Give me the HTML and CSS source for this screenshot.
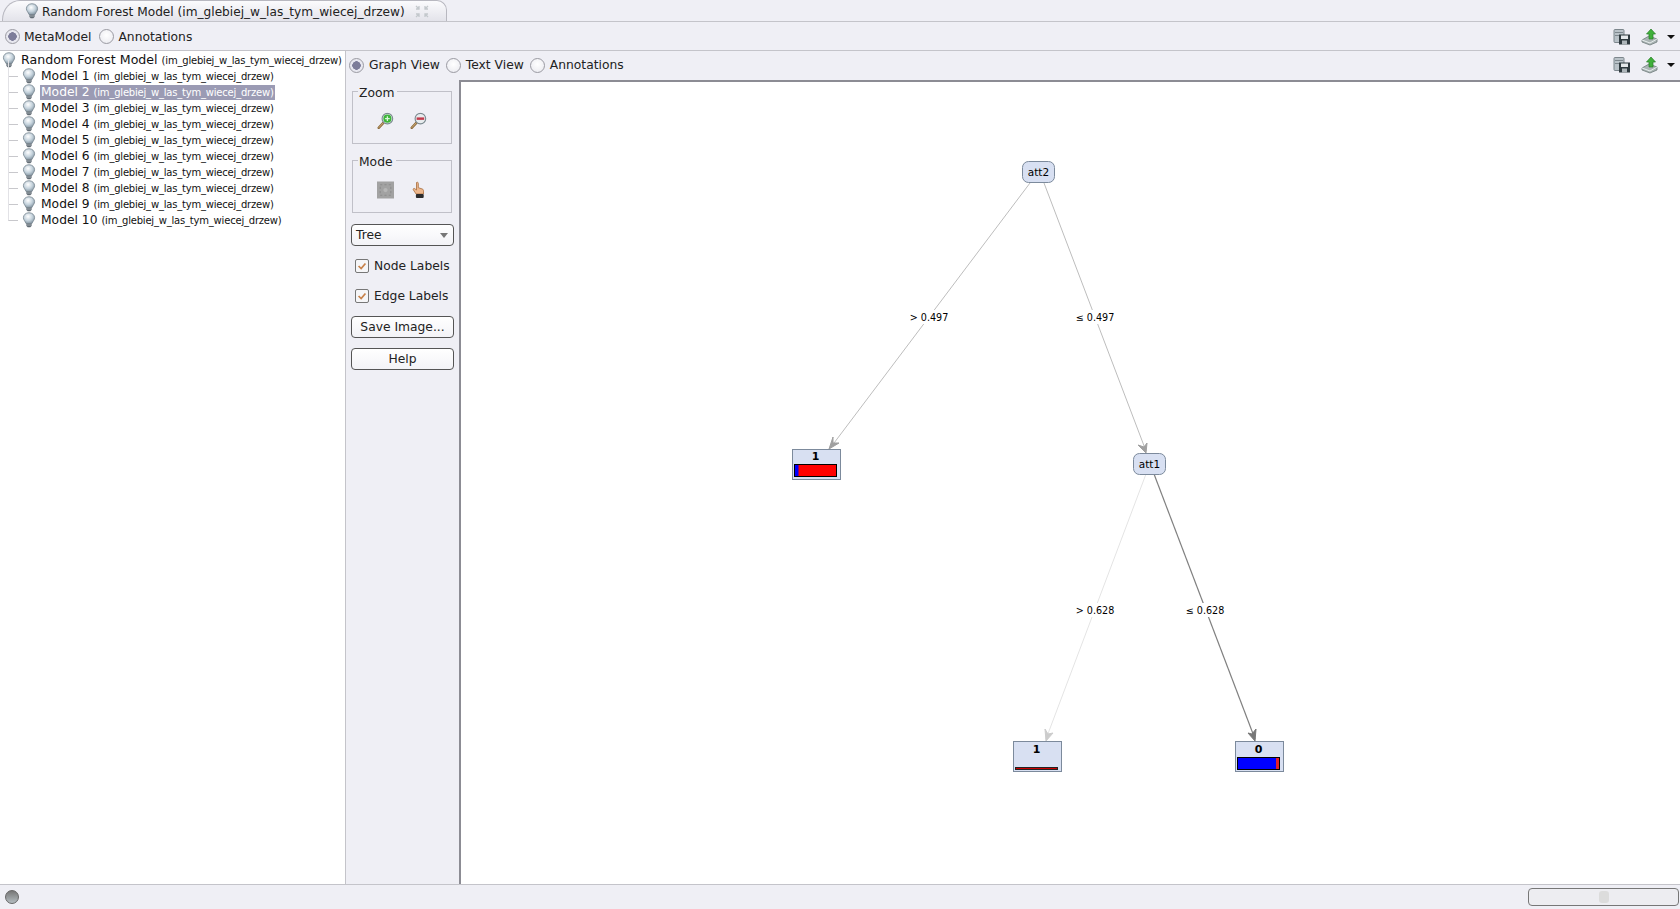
FILE: index.html
```html
<!DOCTYPE html>
<html lang="en">
<head>
<meta charset="utf-8">
<title>Random Forest Model</title>
<link rel="stylesheet" href="styles.css">
</head>
<body>
<svg class="defs" width="0" height="0" aria-hidden="true">
  <defs>
    <radialGradient id="glass" cx="0.42" cy="0.35" r="0.7">
      <stop offset="0" stop-color="#ffffff"/>
      <stop offset="0.55" stop-color="#c4d2dc"/>
      <stop offset="1" stop-color="#7f909c"/>
    </radialGradient>
    <symbol id="bulb" viewBox="0 0 16 18">
      <path d="M8 .7C4.200.7 1.600 3.300 1.600 6.400c0 2.600 2.200 4 3 6.600h6.800c.8-2.600 3-4 3-6.600C14.400 3.300 11.800.7 8 .7z" fill="url(#glass)" stroke="#76858f" stroke-width=".9"/>
      <path d="M5 13.200h6v2.300l-1.500 1.800h-3L5 15.500z" fill="#59636b"/>
      <path d="M5 14.300h6M5 15.500h6" stroke="#b4bcc2" stroke-width=".6"/>
    </symbol>
    <symbol id="floppy" viewBox="0 0 18 17">
      <rect x="1" y="1" width="10" height="13" rx="1" fill="#b9c2c8" stroke="#7d878d"/>
      <path d="M2 4h8M2 7h8" stroke="#7d878d"/>
      <rect x="6" y="6" width="11" height="10" fill="#2f3a3f"/>
      <rect x="8" y="7" width="7" height="3.500" fill="#e4e8ea"/>
      <rect x="9" y="12" width="5" height="4" fill="#aeb6ba"/>
    </symbol>
    <symbol id="upload" viewBox="0 0 18 18">
      <path d="M1 12l7-4 8 3v3l-7 3-8-3z" fill="#aab4b4" stroke="#6f7b7b" stroke-width=".8"/>
      <path d="M1 12l8 3 7-4" fill="none" stroke="#e8eeee" stroke-width="1"/>
      <path d="M10 1l4.500 5h-2.500v5H8V6H5.500z" fill="#3fb03a" stroke="#2a7d2a" stroke-width=".7"/>
    </symbol>
    <symbol id="lens" viewBox="0 0 18 18">
      <path d="M1.800 16.200l5.400-5.800" stroke="#8a6a3c" stroke-width="2.600" stroke-linecap="round"/>
      <path d="M1.800 16.200l5.400-5.800" stroke="#d8b27a" stroke-width="1"/>
      <circle cx="11" cy="6.500" r="5.600" fill="#e8ecee" stroke="#7c8a90" stroke-width="1.200"/>
    </symbol>
  </defs>
</svg>

<div class="window">
  <div class="tabbar">
    <div class="tab">
      <svg class="bulb tab-bulb"><use href="#bulb"/></svg>
      <span class="tab-title">Random Forest Model (im_glebiej_w_las_tym_wiecej_drzew)</span>
      <svg class="detach" viewBox="0 0 14 13">
        <path d="M1 1l3 3M4 1v3H1M13 1l-3 3M10 1v3h3M1 12l3-3M4 12V9H1M13 12l-3-3M10 12V9h3" fill="none" stroke="#c3c8cc" stroke-width="1.300"/>
      </svg>
    </div>
  </div>

  <div class="toolbar top-toolbar">
    <label class="radio-item"><span class="radio on"></span>MetaModel</label>
    <label class="radio-item"><span class="radio"></span>Annotations</label>
    <div class="tool-icons">
      <svg class="tool-icon"><use href="#floppy"/></svg>
      <svg class="tool-icon"><use href="#upload"/></svg>
      <span class="drop-arrow"></span>
    </div>
  </div>

  <div class="main">
    <aside class="tree">
      <div class="tree-root">
        <svg class="bulb"><use href="#bulb"/></svg>
        <span class="node-text root-text">Random Forest Model <small>(im_glebiej_w_las_tym_wiecej_drzew)</small></span>
      </div>
      <ul class="tree-list">
        <li class="tree-row"><svg class="bulb"><use href="#bulb"/></svg><span class="node-text">Model 1 <small>(im_glebiej_w_las_tym_wiecej_drzew)</small></span></li>
        <li class="tree-row"><svg class="bulb"><use href="#bulb"/></svg><span class="node-text selected">Model 2 <small>(im_glebiej_w_las_tym_wiecej_drzew)</small></span></li>
        <li class="tree-row"><svg class="bulb"><use href="#bulb"/></svg><span class="node-text">Model 3 <small>(im_glebiej_w_las_tym_wiecej_drzew)</small></span></li>
        <li class="tree-row"><svg class="bulb"><use href="#bulb"/></svg><span class="node-text">Model 4 <small>(im_glebiej_w_las_tym_wiecej_drzew)</small></span></li>
        <li class="tree-row"><svg class="bulb"><use href="#bulb"/></svg><span class="node-text">Model 5 <small>(im_glebiej_w_las_tym_wiecej_drzew)</small></span></li>
        <li class="tree-row"><svg class="bulb"><use href="#bulb"/></svg><span class="node-text">Model 6 <small>(im_glebiej_w_las_tym_wiecej_drzew)</small></span></li>
        <li class="tree-row"><svg class="bulb"><use href="#bulb"/></svg><span class="node-text">Model 7 <small>(im_glebiej_w_las_tym_wiecej_drzew)</small></span></li>
        <li class="tree-row"><svg class="bulb"><use href="#bulb"/></svg><span class="node-text">Model 8 <small>(im_glebiej_w_las_tym_wiecej_drzew)</small></span></li>
        <li class="tree-row"><svg class="bulb"><use href="#bulb"/></svg><span class="node-text">Model 9 <small>(im_glebiej_w_las_tym_wiecej_drzew)</small></span></li>
        <li class="tree-row"><svg class="bulb"><use href="#bulb"/></svg><span class="node-text">Model 10 <small>(im_glebiej_w_las_tym_wiecej_drzew)</small></span></li>
      </ul>
    </aside>

    <section class="viewer">
      <div class="toolbar view-toolbar">
        <label class="radio-item"><span class="radio on"></span>Graph View</label>
        <label class="radio-item"><span class="radio"></span>Text View</label>
        <label class="radio-item"><span class="radio"></span>Annotations</label>
        <div class="tool-icons">
          <svg class="tool-icon"><use href="#floppy"/></svg>
          <svg class="tool-icon"><use href="#upload"/></svg>
          <span class="drop-arrow"></span>
        </div>
      </div>

      <div class="view-body">
        <div class="controls">
          <fieldset class="group">
            <legend>Zoom</legend>
            <svg class="ctl-icon" viewBox="0 0 18 18"><use href="#lens"/><circle cx="11" cy="6.500" r="4.300" fill="#3db53a"/><path d="M8.500 6.500h5M11 4v5" stroke="#d8f5d8" stroke-width="1.400"/></svg>
            <svg class="ctl-icon" viewBox="0 0 18 18"><use href="#lens"/><path d="M7 6.500h8" stroke="#c23a4c" stroke-width="2.600"/></svg>
          </fieldset>
          <fieldset class="group">
            <legend>Mode</legend>
            <svg class="ctl-icon" viewBox="0 0 16 16"><rect width="16" height="16" fill="#a2a2a2"/><rect x="3" y="3" width="10" height="10" fill="none" stroke="#8c8c8c" stroke-dasharray="2 2"/><circle cx="8" cy="8" r="2" fill="#b6b6b6"/></svg>
            <svg class="ctl-icon" viewBox="0 0 16 18"><path d="M6 1.500c1-.8 1.800 0 1.800 1v4.200l4 1.300c1 .4 1.200 1.200 1.200 2.200v2.800H5.600L2.800 8.800c-.5-1 .6-1.800 1.500-1.100L6 9z" fill="#eeb88e" stroke="#a66c3c" stroke-width=".8"/><rect x="5.400" y="13" width="7.800" height="4" rx="1" fill="#2c2c2c"/></svg>
          </fieldset>
          <div class="select">Tree<span class="select-arrow"></span></div>
          <label class="check-item"><span class="check"><svg viewBox="0 0 14 14"><path d="M3 7l3 3 5-6" fill="none" stroke="#c8824a" stroke-width="2"/></svg></span>Node Labels</label>
          <label class="check-item"><span class="check"><svg viewBox="0 0 14 14"><path d="M3 7l3 3 5-6" fill="none" stroke="#c8824a" stroke-width="2"/></svg></span>Edge Labels</label>
          <button class="btn">Save Image...</button>
          <button class="btn">Help</button>
        </div>

        <div class="canvas">
          <svg class="graph" width="1219" height="803" viewBox="461 81 1219 803">
            <g fill="none">
              <path d="M1030 183L831 447" stroke="#bdbdbd"/>
              <path d="M1044 183L1146 451" stroke="#bdbdbd"/>
              <path d="M1146 474L1046 739" stroke="#e4e4e4"/>
              <path d="M1154 474L1255 739" stroke="#808080" stroke-width="1.200"/>
            </g>
            <polygon class="head mid" points="829,449 833,437 833,443 839,443"/>
            <polygon class="head mid" points="1146,453 1138,445 1144,447 1147,443"/>
            <polygon class="head light" points="1046,741 1045,729 1048,734 1053,733"/>
            <polygon class="head dark" points="1255,741 1248,733 1252,734 1256,729"/>
            <g class="edge-label">
              <rect x="908" y="310" width="42" height="14" fill="#fff"/>
              <text x="929" y="321">&gt; 0.497</text>
              <rect x="1074" y="310" width="42" height="14" fill="#fff"/>
              <text x="1095" y="321">≤ 0.497</text>
              <rect x="1074" y="603" width="42" height="14" fill="#fff"/>
              <text x="1095" y="614">&gt; 0.628</text>
              <rect x="1184" y="603" width="42" height="14" fill="#fff"/>
              <text x="1205" y="614">≤ 0.628</text>
            </g>
            <g class="inner-node">
              <rect x="1022.500" y="161.500" width="32" height="21" rx="6"/>
              <text x="1038.500" y="176">att2</text>
              <rect x="1133.500" y="453.500" width="32" height="21" rx="6"/>
              <text x="1149.500" y="468">att1</text>
            </g>
            <g class="leaf">
              <rect class="leaf-box" x="792.500" y="449.500" width="48" height="30"/>
              <text x="815.500" y="460">1</text>
              <rect x="794.500" y="464.500" width="42" height="12" fill="#f00" stroke="#000"/>
              <rect x="795" y="465" width="3.500" height="11" fill="#00f"/>
              <rect class="leaf-box" x="1013.500" y="741.500" width="48" height="30"/>
              <text x="1036.500" y="753">1</text>
              <rect x="1015.500" y="767.500" width="42" height="2" fill="#c00" stroke="#222"/>
              <rect class="leaf-box" x="1235.500" y="741.500" width="48" height="30"/>
              <text x="1258.500" y="753">0</text>
              <rect x="1237.500" y="757.500" width="42" height="12" fill="#00f" stroke="#000"/>
              <rect x="1276" y="758" width="3" height="11" fill="#e0202a"/>
            </g>
          </svg>
        </div>
      </div>
    </section>
  </div>

  <footer class="statusbar">
    <span class="status-led"></span>
    <div class="progress"><span class="progress-thumb"></span></div>
  </footer>
</div>
</body>
</html>
```

FILE: styles.css
```css
* { box-sizing: border-box; }
html, body { margin: 0; height: 100%; overflow: hidden; }
body {
  background: #efeff5;
  color: #000;
  font-family: "DejaVu Sans", sans-serif;
  font-size: 12.3px;
}
.defs { display: block; height: 0; }
.window { display: flex; flex-direction: column; height: 909px; }

.tabbar {
  height: 22px;
  padding-left: 2px;
  border-bottom: 1px solid #c4c4ca;
  display: flex;
}
.tab {
  width: 445px;
  height: 21px;
  display: flex;
  align-items: center;
  padding: 1px 0 0 22px;
  border: 1px solid #b8b8c0;
  border-bottom: none;
  border-radius: 18px 10px 0 0 / 20px 10px 0 0;
  background: linear-gradient(#fbfbfd, #e3e3ea);
  color: #222;
}
.tab-bulb { margin: -1px 3px 0 0; }
.tab-title { margin-right: 10px; white-space: nowrap; font-size: 12.15px; }
.detach { width: 14px; height: 13px; flex: none; }

.bulb { width: 14px; height: 18px; flex: none; }

.toolbar {
  display: flex;
  align-items: center;
  color: #222;
}
.top-toolbar {
  height: 29px;
  padding: 1px 0 0 5px;
  border-bottom: 1px solid #c4c4ca;
}
.view-toolbar {
  height: 30px;
  padding: 0 0 2px 3px;
}
.radio-item { display: flex; align-items: center; gap: 4px; margin-right: 8px; }
.view-toolbar .radio-item { gap: 5px; margin-right: 6px; }
.radio {
  width: 15px;
  height: 15px;
  border-radius: 50%;
  border: 1px solid #9a9aa2;
  background: radial-gradient(circle at 50% 40%, #fff, #e8e8ee);
  display: block;
}
.radio.on {
  background: radial-gradient(circle, #7d7d9a 0 4px, #e8e8f0 4.500px);
}
.tool-icons {
  margin-left: auto;
  display: flex;
  align-items: center;
  gap: 10px;
  padding-right: 5px;
}
.tool-icon { width: 18px; height: 18px; display: block; }
.drop-arrow {
  width: 0;
  height: 0;
  margin-left: -2px;
  border-left: 4px solid transparent;
  border-right: 4px solid transparent;
  border-top: 4px solid #111;
}

.main { flex: 1; display: flex; min-height: 0; }

.tree {
  width: 346px;
  flex: none;
  background: #fff;
  border-right: 1px solid #c4c4ca;
  padding-top: 1px;
  position: relative;
  overflow: hidden;
}
.tree-root, .tree-row {
  height: 16px;
  display: flex;
  align-items: center;
  white-space: nowrap;
}
.tree-root { padding-left: 2px; }
.root-text { font-size: 12.6px; margin-left: 3px; }
.tree-list {
  list-style: none;
  margin: 0;
  padding: 0 0 0 8px;
}
.tree-row {
  padding-left: 14px;
  position: relative;
}
.tree-row::before {
  content: "";
  position: absolute;
  left: 0;
  top: -8px;
  width: 9px;
  height: 16px;
  border-left: 1px solid #e2e2e6;
  border-bottom: 1px solid #c8c8cc;
}
.node-text { padding: 0 1px; margin-left: 4px; line-height: 15px; color: #111; }
.node-text small { font-size: 10px; letter-spacing: -.2px; }
.selected { background: #9b9bb4; color: #fff; }

.viewer { flex: 1; display: flex; flex-direction: column; min-width: 0; }
.view-body { flex: 1; display: flex; min-height: 0; }

.controls {
  width: 113px;
  flex: none;
  padding: 2px 5px 0;
  display: flex;
  flex-direction: column;
  color: #222;
}
.group {
  margin: 0 0 8px 1px;
  padding: 12px 0 0;
  height: 61px;
  width: 100px;
  flex: none;
  border: 1px solid #c0c0c8;
  display: flex;
  justify-content: center;
  gap: 16px;
  align-items: flex-start;
}
.group legend { padding: 4px 3px 0 1px; margin-left: 5px; line-height: 13px; }
.ctl-icon { width: 17px; height: 18px; flex: none; }
.select, .btn {
  width: 103px;
  height: 22px;
  flex: none;
  border: 1px solid #555;
  border-radius: 4px;
  background: linear-gradient(#fff, #f3f3f7);
  color: #222;
  font: inherit;
}
.select {
  display: flex;
  align-items: center;
  padding-left: 4px;
  position: relative;
  margin: 3px 0 9px;
}
.select-arrow {
  position: absolute;
  right: 5px;
  top: 8px;
  border-left: 4px solid transparent;
  border-right: 4px solid transparent;
  border-top: 5px solid #777;
}
.check-item {
  height: 21px;
  margin-bottom: 9px;
  display: flex;
  align-items: center;
  gap: 5px;
  padding-left: 4px;
}
.check-item + .btn { margin-top: 1px; }
.check {
  width: 14px;
  height: 14px;
  border: 1px solid #777;
  border-radius: 2px;
  background: #f6f6f8;
  display: block;
}
.check svg { display: block; width: 12px; height: 12px; }
.btn { margin-bottom: 10px; padding: 0; }

.canvas {
  flex: 1;
  min-width: 0;
  background: #fff;
  border-top: 2px solid #8c8c94;
  border-left: 2px solid #8c8c94;
  overflow: hidden;
  margin-top: -1px;
}
.graph { display: block; margin: -1px 0 0; }
.head { stroke-width: 1; stroke-linejoin: round; }
.head.mid { fill: #a0a0a0; stroke: #a0a0a0; }
.head.light { fill: #cccccc; stroke: #cccccc; }
.head.dark { fill: #777777; stroke: #777777; }
.edge-label text { font-size: 9.6px; text-anchor: middle; fill: #000; }
.inner-node rect { fill: #d8e0f2; stroke: #7c8a9c; }
.inner-node text { font-size: 10.5px; text-anchor: middle; fill: #000; }
.leaf-box { fill: #d8e0f2; stroke: #7c8a9c; }
.leaf text { font-size: 11px; font-weight: bold; text-anchor: middle; fill: #000; }

.statusbar {
  height: 25px;
  flex: none;
  display: flex;
  align-items: center;
  justify-content: space-between;
  border-top: 1px solid #c4c4ca;
  padding: 0 1px 0 5px;
}
.status-led {
  width: 14px;
  height: 14px;
  border-radius: 50%;
  border: 1px solid #666;
  background: linear-gradient(#777, #b4bcc0);
}
.progress {
  width: 151px;
  height: 18px;
  border: 1px solid #777;
  border-radius: 4px;
  background: #ededf1;
  display: flex;
  justify-content: center;
  align-items: center;
}
.progress-thumb { width: 10px; height: 12px; background: #dcdcdc; border-radius: 3px; }
```
